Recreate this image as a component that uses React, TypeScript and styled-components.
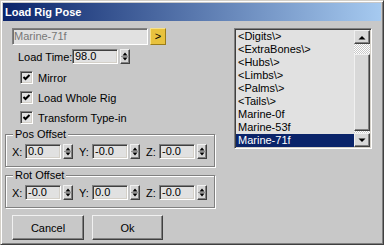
import React from "react";
import styled, { createGlobalStyle, css } from "styled-components";

const FACE = "#c8c8c8";
const FIELD = "#e1e1e1";

const GlobalStyle = createGlobalStyle`
  html, body {
    margin: 0;
    padding: 0;
    background: ${FACE};
  }
  body {
    font-family: "Liberation Sans", Arial, sans-serif;
    font-size: 11px;
    color: #000;
  }
`;

const sunken = css`
  border: 1px solid;
  border-color: #808080 #fff #fff #808080;
  box-shadow: inset 1px 1px 0 #404040, inset -1px -1px 0 #d4d0c8;
`;

const raised = css`
  border: 1px solid;
  border-color: #f0f0f0 #404040 #404040 #f0f0f0;
  box-shadow: inset -1px -1px 0 #808080;
`;

const Window = styled.div`
  width: 384px;
  height: 245px;
  box-sizing: border-box;
  border: 1px solid;
  border-color: #d4d0c8 #404040 #404040 #d4d0c8;
  box-shadow: inset 1px 1px 0 #fff, inset -1px -1px 0 #808080;
  padding: 2px;
  background: ${FACE};
  display: flex;
  flex-direction: column;
`;

const TitleBar = styled.div`
  height: 18px;
  flex-shrink: 0;
  padding-left: 2px;
  background: linear-gradient(to right, #0a246a, #a6caf0);
  color: #fff;
  font-weight: bold;
  font-size: 11px;
  line-height: 18px;
`;

const Body = styled.div`
  display: flex;
  align-items: flex-start;
  padding-left: 2px;
`;

const LeftColumn = styled.div`
  width: 210px;
  padding-top: 7px;
  display: flex;
  flex-direction: column;
`;

const NameRow = styled.div`
  display: flex;
  gap: 2px;
  margin-left: 7px;
  height: 17px;
`;

const NameField = styled.div`
  width: 136px;
  box-sizing: border-box;
  ${sunken};
  box-shadow: inset 1px 1px 0 #707070;
  background: ${FIELD};
  color: #777;
  padding-left: 1px;
  line-height: 15px;
`;

const PickButton = styled.div`
  width: 16px;
  box-sizing: border-box;
  border: 1px solid;
  border-color: #f6e08a #9a7c18 #9a7c18 #f6e08a;
  background: #e8c23e;
  display: flex;
  align-items: center;
  justify-content: center;
  line-height: 13px;
`;

const LoadTimeRow = styled.div`
  display: flex;
  align-items: center;
  margin: 4px 0 0 13px;
  height: 15px;
`;

const FieldLabel = styled.span<{ $width: number }>`
  width: ${(p) => p.$width}px;
  flex-shrink: 0;
  white-space: nowrap;
`;

const NumberField = styled.div<{ $width: number }>`
  width: ${(p) => p.$width}px;
  height: 15px;
  box-sizing: border-box;
  ${sunken};
  background: ${FIELD};
  padding-left: 2px;
  line-height: 13px;
  overflow: hidden;
`;

const SpinBox = styled.div`
  width: 10px;
  height: 15px;
  box-sizing: border-box;
  margin-left: 2px;
  ${raised};
  background: #d6d6d6;
  display: flex;
`;

const CheckList = styled.div`
  display: flex;
  flex-direction: column;
  gap: 7px;
  margin: 7px 0 0 15px;
`;

const CheckRow = styled.label`
  display: flex;
  align-items: center;
  gap: 5px;
  height: 13px;
`;

const CheckBox = styled.span`
  width: 13px;
  height: 13px;
  box-sizing: border-box;
  ${sunken};
  background: ${FIELD};
  display: flex;
  align-items: center;
  justify-content: center;
`;

const Group = styled.div<{ $top: number }>`
  position: relative;
  margin-top: ${(p) => p.$top}px;
  border: 1px solid #808080;
  box-shadow: inset 1px 1px 0 #fff, 1px 1px 0 #fff;
  padding: 9px 0 7px 6px;
`;

const GroupLabel = styled.span`
  position: absolute;
  top: -7px;
  left: 7px;
  padding: 0 2px;
  background: ${FACE};
  line-height: 13px;
`;

const OffsetRow = styled.div`
  display: flex;
  gap: 6px;
`;

const OffsetField = styled.div`
  display: flex;
  align-items: center;
`;

const ButtonRow = styled.div`
  display: flex;
  gap: 8px;
  margin: 7px 0 0 7px;
`;

const PushButton = styled.div<{ $width: number }>`
  width: ${(p) => p.$width}px;
  height: 25px;
  box-sizing: border-box;
  ${raised};
  background: ${FACE};
  display: flex;
  align-items: center;
  justify-content: center;
`;

const ListBox = styled.div`
  width: 138px;
  height: 121px;
  box-sizing: border-box;
  margin: 7px 0 0 19px;
  ${sunken};
  padding: 1px;
  background: ${FIELD};
  display: flex;
`;

const Items = styled.div`
  flex: 1;
  display: flex;
  flex-direction: column;
`;

const Item = styled.div<{ $selected?: boolean }>`
  height: 13px;
  line-height: 13px;
  padding-left: 2px;
  white-space: nowrap;
  background: ${(p) => (p.$selected ? "#0a246a" : "transparent")};
  color: ${(p) => (p.$selected ? "#fff" : "#000")};
`;

const ScrollBar = styled.div`
  width: 16px;
  display: flex;
  flex-direction: column;
`;

const ScrollButton = styled.div`
  height: 14px;
  box-sizing: border-box;
  ${raised};
  background: #d8d8d8;
  display: flex;
  align-items: center;
  justify-content: center;
`;

const Track = styled.div`
  flex: 1;
  display: flex;
  flex-direction: column;
  background: repeating-conic-gradient(#ffffff 0 25%, #c8c8c8 0 50%) 0 0 / 2px 2px;
`;

const Thumb = styled.div`
  margin-top: 10px;
  height: 77px;
  box-sizing: border-box;
  ${raised};
  background: #d8d8d8;
`;

const SpinArrows = () => (
  <svg width="8" height="13" viewBox="0 0 8 13">
    <polygon points="1.5,5.5 4,2.5 6.5,5.5" fill="#000" />
    <line x1="0" y1="6.5" x2="8" y2="6.5" stroke="#909090" strokeWidth="1" />
    <polygon points="1.5,7.5 6.5,7.5 4,10.5" fill="#000" />
  </svg>
);

const Spinner = () => (
  <SpinBox>
    <SpinArrows />
  </SpinBox>
);

const CheckMark = () => (
  <svg width="9" height="9" viewBox="0 0 9 9">
    <path d="M1.5 4 L3.5 6 L7.5 2" fill="none" stroke="#000" strokeWidth="2" />
  </svg>
);

const Arrow = ({ up }: { up?: boolean }) => (
  <svg width="8" height="5" viewBox="0 0 8 5">
    <polygon points={up ? "0.5,4.5 4,1 7.5,4.5" : "0.5,0.5 7.5,0.5 4,4"} fill="#000" />
  </svg>
);

const options = ["Mirror", "Load Whole Rig", "Transform Type-in"];

const groups = [
  { name: "Pos Offset", values: ["0.0", "-0.0", "-0.0"], top: 10 },
  { name: "Rot Offset", values: ["-0.0", "0.0", "-0.0"], top: 8 },
];

const poses = [
  "<Digits\\>",
  "<ExtraBones\\>",
  "<Hubs\\>",
  "<Limbs\\>",
  "<Palms\\>",
  "<Tails\\>",
  "Marine-0f",
  "Marine-53f",
  "Marine-71f",
];

const App = () => {
  return (
    <>
      <GlobalStyle />
      <Window>
        <TitleBar>Load Rig Pose</TitleBar>
        <Body>
          <LeftColumn>
            <NameRow>
              <NameField>Marine-71f</NameField>
              <PickButton>&gt;</PickButton>
            </NameRow>
            <LoadTimeRow>
              <FieldLabel $width={54}>Load Time:</FieldLabel>
              <NumberField $width={46}>98.0</NumberField>
              <Spinner />
            </LoadTimeRow>
            <CheckList>
              {options.map((o) => (
                <CheckRow key={o}>
                  <CheckBox>
                    <CheckMark />
                  </CheckBox>
                  {o}
                </CheckRow>
              ))}
            </CheckList>
            {groups.map((g) => (
              <Group key={g.name} $top={g.top}>
                <GroupLabel>{g.name}</GroupLabel>
                <OffsetRow>
                  {["X:", "Y:", "Z:"].map((axis, i) => (
                    <OffsetField key={axis}>
                      <FieldLabel $width={13}>{axis}</FieldLabel>
                      <NumberField $width={36}>{g.values[i]}</NumberField>
                      <Spinner />
                    </OffsetField>
                  ))}
                </OffsetRow>
              </Group>
            ))}
            <ButtonRow>
              <PushButton $width={72}>Cancel</PushButton>
              <PushButton $width={71}>Ok</PushButton>
            </ButtonRow>
          </LeftColumn>
          <ListBox>
            <Items>
              {poses.map((p, i) => (
                <Item key={p} $selected={i === poses.length - 1}>
                  {p}
                </Item>
              ))}
            </Items>
            <ScrollBar>
              <ScrollButton>
                <Arrow up />
              </ScrollButton>
              <Track>
                <Thumb />
              </Track>
              <ScrollButton>
                <Arrow />
              </ScrollButton>
            </ScrollBar>
          </ListBox>
        </Body>
      </Window>
    </>
  );
};

export default App;
